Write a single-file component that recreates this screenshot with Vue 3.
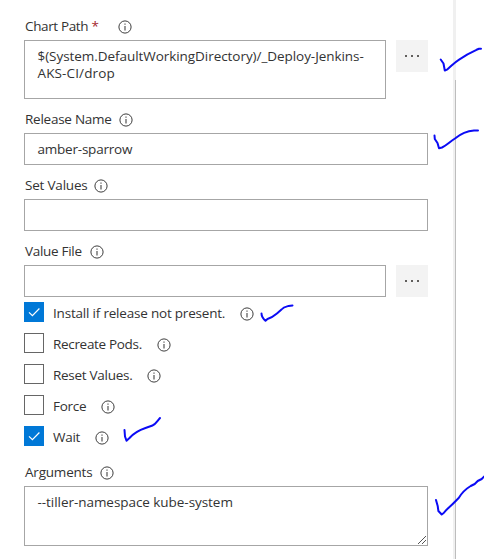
<script setup>
import { h } from 'vue'

const InfoIcon = () =>
  h('svg', { class: 'info', viewBox: '0 0 14 14', width: 14, height: 14 }, [
    h('circle', { cx: 7, cy: 7, r: 6.1, fill: 'none', stroke: '#333', 'stroke-width': 0.95 }),
    h('path', { d: 'M7 6v4.500M7 3.600v1.200', fill: 'none', stroke: '#444', 'stroke-width': 1.1 }),
  ])

const options = [
  { key: 'install', label: 'Install if release not present.', checked: true },
  { key: 'recreate', label: 'Recreate Pods.', checked: false },
  { key: 'reset', label: 'Reset Values.', checked: false },
  { key: 'force', label: 'Force', checked: false },
  { key: 'wait', label: 'Wait', checked: true },
]
</script>

<template>
  <main class="page">
    <form class="form" @submit.prevent>
      <div class="label first"><span class="name chart">Chart Path <b>*</b></span><InfoIcon /></div>
      <div class="row">
        <div class="box tall"><span class="path">$(System.DefaultWorkingDirectory)/_Deploy-Jenkins-</span><br><span class="path2">AKS-CI/drop</span></div>
        <button class="browse" type="button"><i></i><i></i><i></i></button>
      </div>
      <div class="label"><span class="name release">Release Name</span><InfoIcon /></div>
      <div class="box"><span class="amber">amber-sparrow</span></div>
      <div class="label"><span class="name set">Set Values</span><InfoIcon /></div>
      <div class="box"></div>
      <div class="label"><span class="name file">Value File</span><InfoIcon /></div>
      <div class="row">
        <div class="box"></div>
        <button class="browse" type="button"><i></i><i></i><i></i></button>
      </div>
      <div class="options">
        <div v-for="o in options" :key="o.key" class="option">
          <span class="check" :class="{ on: o.checked }">
            <svg v-if="o.checked" width="20" height="20" viewBox="0 0 20 20"><path d="M5 10.400l3.400 3.300 7-7.200" fill="none" stroke="#fff" stroke-width="1.200" /></svg>
          </span>
          <span class="name" :class="o.key">{{ o.label }}</span><InfoIcon />
        </div>
      </div>
      <div class="label args-label"><span class="name arguments">Arguments</span><InfoIcon /></div>
      <div class="box args"><span class="tiller">--tiller-namespace kube-system</span>
        <svg class="grip" width="10" height="10" viewBox="0 0 10 10"><path d="M1 9L9 1M5 9L9 5" stroke="#555" stroke-width="1" /></svg>
      </div>
    </form>
    <div class="divider"><div class="thumb"></div></div>
    <svg class="ink" width="484" height="559" viewBox="0 0 484 559">
      <path d="M440.700 59.500l2.800 4 1.300 7 2.700-1.200c4-3.500 7-7 12-10l8-5 9-4.500 2.500-1h2" />
      <path d="M434.500 135.500l.3 3.500 2.700 4 1.500 5.300 3-.8c5-2.500 8-6 13-9 6-5 12-7.500 19-8h4" />
      <path d="M261.500 313.500c0 3 1.500 5 4 7.300l2-1.800c5-1.500 7-3.500 10-6l4-3.500c2-2.500 5-3 7-3.500l4-.6" />
      <path d="M124.500 430l.5 6.500 1.500 4.200 3-2.700c4-4.500 10-8 16-10l7-2.500c3-1 4-3.500 7.500-7.500" />
      <path d="M436 500l1.700 6 .7 5 3.300 3.500 2-1.500c3-4 7-7 10-10l5-5c3-5 7-9 12-12l4-2 3-3 4-2 2.500-2.500" />
    </svg>
  </main>
</template>

<style>
body { margin: 0; background: #fff; }
</style>

<style scoped>
.page { position: relative; display: flex; width: 484px; height: 559px; overflow: hidden; background: #fff; font: 13.5px/17px "Open Sans", "Noto Sans", sans-serif; color: #333; }
.form { width: 404px; margin-left: 24px; flex: none; }
.label { display: flex; align-items: center; height: 34px; box-sizing: border-box; padding-top: 7px; padding-left: 1px; }
.label.first { height: 40px; padding-top: 13px; }
.name { white-space: pre; flex: none; }
.name b { color: #a4262c; font-weight: 400; }
.info { display: block; flex: none; }
.row { display: flex; justify-content: space-between; }
.row .box { width: 362px; }
.box { box-sizing: border-box; height: 32px; border: 1px solid #a6a6a6; padding: 7px 12px 0 12.500px; white-space: nowrap; position: relative; }
.box.tall { height: 59px; }
.browse { width: 32px; height: 32px; border: 0; padding: 0; background: #f3f3f3; display: flex; align-items: center; justify-content: center; gap: 4px; }
.browse i { width: 2px; height: 2px; background: #605e5c; }
.options { padding-top: 5px; display: flex; flex-direction: column; gap: 11px; }
.option { display: flex; align-items: center; height: 20px; }
.option .name { padding-top: 2px; }
.option .info { margin-top: 3px; }
.check { box-sizing: border-box; width: 20px; height: 20px; border: 1px solid #666; margin-right: 9px; flex: none; }
.check.on { border: 0; background: #0078d7; }
.check svg { display: block; }
.args-label { height: 40px; padding-top: 13px; }
.box.args { height: 60px; }
.grip { position: absolute; right: 0; bottom: 0; }
.chart { width: 93px; letter-spacing: -0.36px; }
.release { width: 94px; letter-spacing: -0.25px; }
.set { width: 69px; letter-spacing: -0.2px; }
.file { width: 65px; letter-spacing: -0.3px; }
.install { width: 187px; letter-spacing: -0.2px; }
.recreate { width: 104px; letter-spacing: -0.32px; }
.reset { width: 94px; letter-spacing: -0.28px; }
.force { width: 48px; letter-spacing: -0.25px; }
.wait { width: 42px; letter-spacing: -0.25px; }
.arguments { width: 75px; letter-spacing: -0.2px; }
.path { letter-spacing: -0.055px; }
.path2 { letter-spacing: 0.13px; }
.amber { letter-spacing: -0.22px; }
.tiller { letter-spacing: -0.05px; }
.divider { width: 3px; height: 559px; margin-left: 25px; background: #f0f0f0; flex: none; box-sizing: border-box; padding: 80px 0 0 2px; }
.thumb { width: 1px; height: 479px; background: #bdbdbd; }
.ink { position: absolute; left: 0; top: 0; fill: none; stroke: #0b0bf5; stroke-width: 2; stroke-linecap: round; stroke-linejoin: round; }
</style>
